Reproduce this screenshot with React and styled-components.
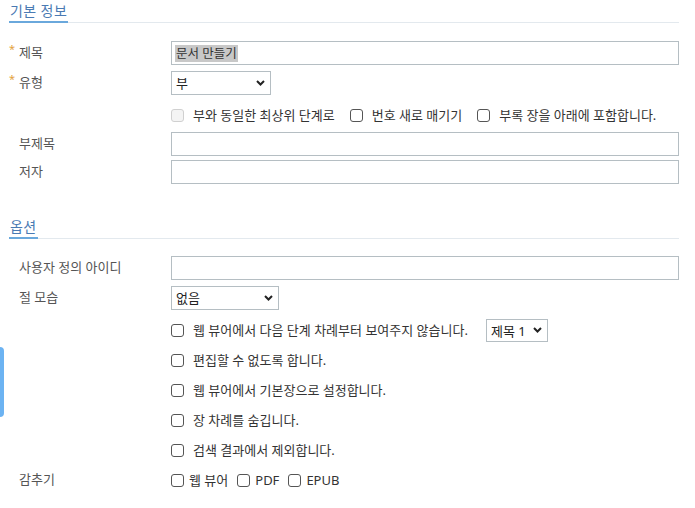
import React from 'react';
import styled, { createGlobalStyle } from 'styled-components';

const GlobalStyle = createGlobalStyle`
    body {
        margin:0;
        background:#fff;
        font-family:"Noto Sans","Noto Sans CJK KR",sans-serif;
    }
`;

const Page = styled.div`
    padding:0 16px 0 9px;
`;

const SideTab = styled.div`
    position:absolute;
    left:0;
    top:347px;
    width:4px;
    height:70px;
    background:#6cb3f2;
    border-radius:0 4px 4px 0;
`;

const SectionHead = styled.div`
    height:22px;
    display:flex;
    align-items:flex-end;
    border-bottom:1px solid #e3e9ee;
    margin-top:${({$top})=>$top||0}px;
`;

const SectionTitle = styled.h2`
    margin:0 0 -1px;
    padding:0 1px;
    font-size:14px;
    font-weight:400;
    line-height:20px;
    letter-spacing:0.4px;
    color:#4a7ab3;
    border-bottom:2px solid #6aa8dc;
`;

const Body = styled.div`
    padding-top:${({$pad})=>$pad}px;
`;

const Row = styled.div`
    display:grid;
    grid-template-columns:162px 1fr;
    align-items:center;
    height:${({$h})=>$h||24}px;
    margin-top:${({$mt})=>$mt||0}px;
`;

const Label = styled.div`
    position:relative;
    padding:0 0 2px 10px;
    font-size:13px;
    line-height:16px;
    color:#555;
`;

const Star = styled.span`
    position:absolute;
    left:0;
    top:-3px;
    font-size:11px;
    color:#e3a23c;
`;

const TextInput = styled.input`
    box-sizing:border-box;
    width:100%;
    height:24px;
    margin:0;
    padding:0 4px;
    border:1px solid #b5bec3;
    font:inherit;
    font-size:13px;
    color:#333;
    outline:none;
`;

const FakeInput = styled.div`
    box-sizing:border-box;
    width:100%;
    height:24px;
    padding:0 3px;
    border:1px solid #b5bec3;
    display:flex;
    align-items:center;
    font-size:12.5px;
    color:#333;
`;

const Selected = styled.span`
    background:#c8c8c8;
    line-height:17px;
    padding:0 1px;
`;

const SelectWrap = styled.div`
    position:relative;
    width:${({$w})=>$w}px;
    height:${({$h})=>$h||24}px;
    margin-left:${({$ml})=>$ml||0}px;
`;

const Select = styled.select`
    appearance:none;
    box-sizing:border-box;
    width:100%;
    height:100%;
    margin:0;
    padding:0 4px;
    border:1px solid #b5bec3;
    border-radius:0;
    background:#fff;
    font:inherit;
    font-size:13px;
    color:#222;
    outline:none;
`;

const Chevron = styled.svg`
    position:absolute;
    right:6px;
    top:50%;
    margin-top:-3px;
    pointer-events:none;
`;

const Check = styled.input.attrs({type:'checkbox'})`
    appearance:none;
    flex:none;
    box-sizing:border-box;
    width:13px;
    height:13px;
    margin:0;
    border:1px solid #555;
    border-radius:3px;
    background:#fff;
    &:disabled {
        border-color:#d0d0d0;
        background:#f4f4f4;
    }
`;

const CheckLine = styled.div`
    display:flex;
    align-items:center;
    gap:${({$gap})=>$gap}px;
`;

const CheckItem = styled.label`
    display:inline-flex;
    align-items:center;
    gap:${({$gap})=>$gap}px;
    font-size:13px;
    line-height:16px;
    color:#333;
    white-space:nowrap;
`;

const Dropdown = ({w, h, ml, value}) => (
    <SelectWrap $w={w} $h={h} $ml={ml}>
        <Select defaultValue={value}>
            <option>{value}</option>
        </Select>
        <Chevron width="9" height="6" viewBox="0 0 9 6">
            <path d="M1 1 L4.5 4.5 L8 1" fill="none" stroke="#222" strokeWidth="2" />
        </Chevron>
    </SelectWrap>
);

const Opt = ({children, disabled, gap=9}) => (
    <CheckItem $gap={gap}>
        <Check disabled={disabled} />
        {children}
    </CheckItem>
);

const App = () => {
  return (
    <Page>
        <GlobalStyle />
        <SideTab />
        <SectionHead>
            <SectionTitle>기본 정보</SectionTitle>
        </SectionHead>
        <Body $pad={18}>
            <Row>
                <Label><Star>*</Star>제목</Label>
                <FakeInput><Selected>문서 만들기</Selected></FakeInput>
            </Row>
            <Row $mt={6}>
                <Label><Star>*</Star>유형</Label>
                <Dropdown w={100} value="부" />
            </Row>
            <Row $mt={6} $h={28}>
                <div />
                <CheckLine $gap={15}>
                    <Opt disabled>부와 동일한 최상위 단계로</Opt>
                    <Opt>번호 새로 매기기</Opt>
                    <Opt>부록 장을 아래에 포함합니다.</Opt>
                </CheckLine>
            </Row>
            <Row $mt={3}>
                <Label>부제목</Label>
                <TextInput />
            </Row>
            <Row $mt={4}>
                <Label>저자</Label>
                <TextInput />
            </Row>
        </Body>

        <SectionHead $top={32}>
            <SectionTitle>옵션</SectionTitle>
        </SectionHead>
        <Body $pad={17}>
            <Row>
                <Label>사용자 정의 아이디</Label>
                <TextInput />
            </Row>
            <Row $mt={6}>
                <Label>절 모습</Label>
                <Dropdown w={108} value="없음" />
            </Row>
            <Row $mt={5} $h={30}>
                <div />
                <CheckLine $gap={0}>
                    <Opt>웹 뷰어에서 다음 단계 차례부터 보여주지 않습니다.</Opt>
                    <Dropdown w={62} h={23} ml={18} value="제목 1" />
                </CheckLine>
            </Row>
            <Row $h={30}>
                <div />
                <Opt>편집할 수 없도록 합니다.</Opt>
            </Row>
            <Row $h={30}>
                <div />
                <Opt>웹 뷰어에서 기본장으로 설정합니다.</Opt>
            </Row>
            <Row $h={30}>
                <div />
                <Opt>장 차례를 숨깁니다.</Opt>
            </Row>
            <Row $h={30}>
                <div />
                <Opt>검색 결과에서 제외합니다.</Opt>
            </Row>
            <Row $h={30}>
                <Label>감추기</Label>
                <CheckLine $gap={9}>
                    <Opt gap={5}>웹 뷰어</Opt>
                    <Opt gap={5}>PDF</Opt>
                    <Opt gap={5}>EPUB</Opt>
                </CheckLine>
            </Row>
        </Body>
    </Page>
  )
}

export default App
